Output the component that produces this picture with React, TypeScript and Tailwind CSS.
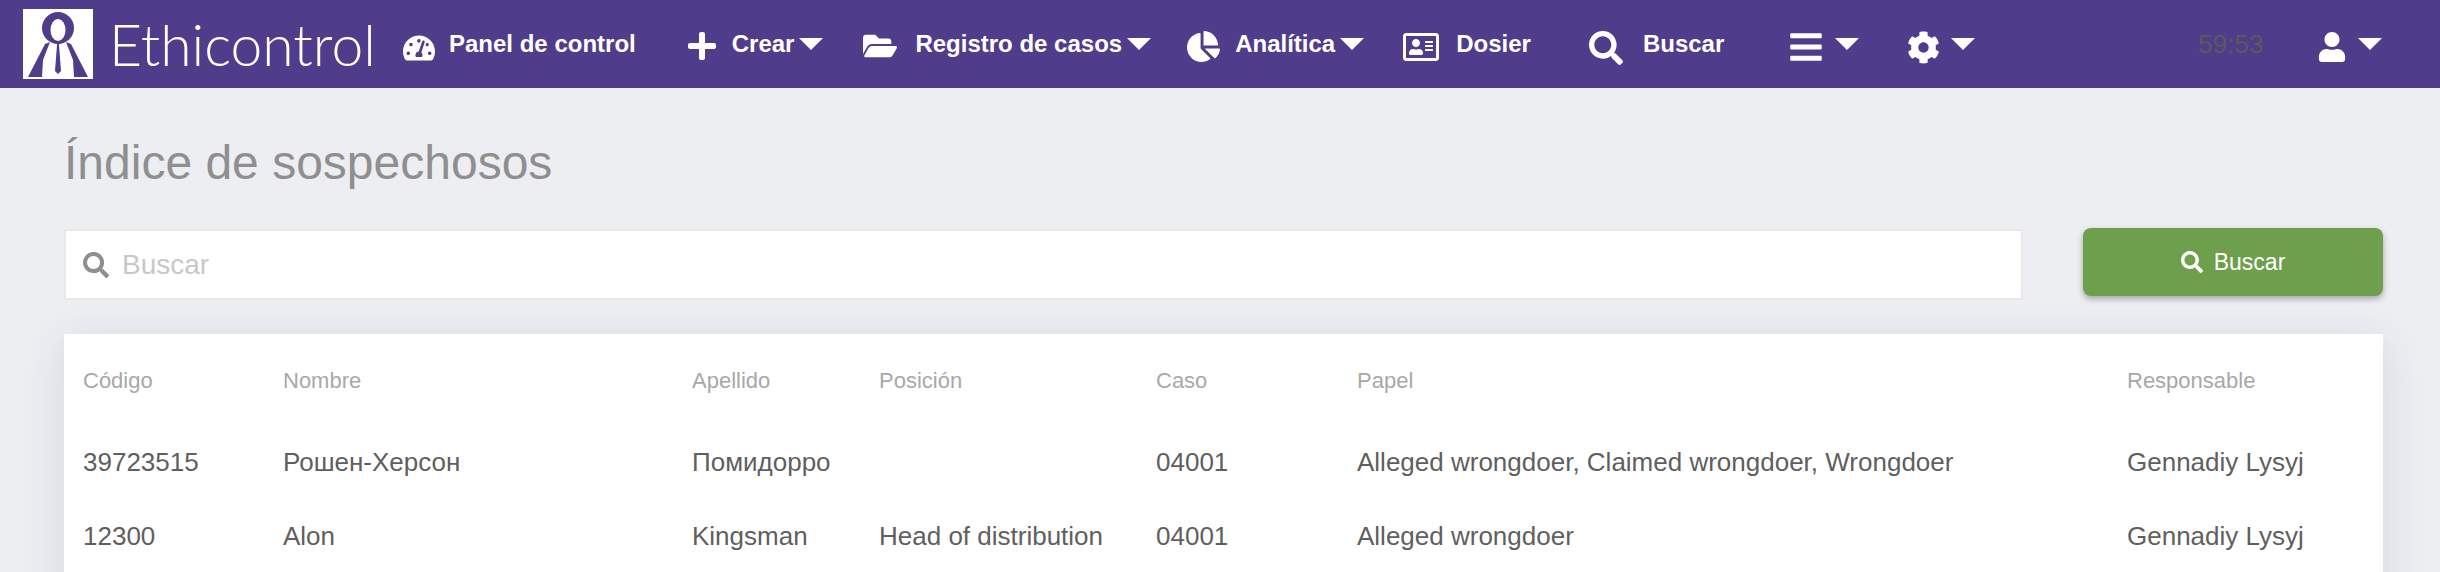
import type { ReactNode } from "react";
import {
  FaBars,
  FaChartPie,
  FaCog,
  FaFolderOpen,
  FaPlus,
  FaRegAddressCard,
  FaSearch,
  FaTachometerAlt,
  FaUser,
} from "react-icons/fa";

const sans = "font-['Liberation_Sans',Arial,sans-serif]";

interface NavItemProps {
  icon: ReactNode;
  label?: string;
  caret?: boolean;
  className?: string;
}

function Caret() {
  return (
    <span className="ml-[5px] h-0 w-0 border-x-[12px] border-t-[12px] border-x-transparent border-t-white" />
  );
}

function NavItem({ icon, label, caret, className }: NavItemProps) {
  return (
    <div className={`flex items-center ${className ?? ""}`}>
      {icon}
      {label && <span className="text-[24px] font-bold text-white">{label}</span>}
      {caret && <Caret />}
    </div>
  );
}

function Logo() {
  return (
    <svg viewBox="0 0 70 70" className="h-[70px] w-[70px] shrink-0">
      <rect width="70" height="70" fill="#fff" />
      <ellipse cx="35" cy="19" rx="16" ry="16" fill="#4f3d8b" />
      <ellipse cx="35" cy="21" rx="7.5" ry="11" fill="#fff" />
      <path d="M5 68 22 35 27 33 20 51 19 68Z" fill="#4f3d8b" />
      <path d="M65 68 48 35 43 33 50 51 51 68Z" fill="#4f3d8b" />
      <path d="M33.5 33h3l-.5 3 2 26-3 3-3-3 2-26Z" fill="#4f3d8b" />
    </svg>
  );
}

const rows = [
  {
    code: "39723515",
    name: "Рошен-Херсон",
    surname: "Помидорро",
    position: "",
    caseId: "04001",
    role: "Alleged wrongdoer, Claimed wrongdoer, Wrongdoer",
    owner: "Gennadiy Lysyj",
  },
  {
    code: "12300",
    name: "Alon",
    surname: "Kingsman",
    position: "Head of distribution",
    caseId: "04001",
    role: "Alleged wrongdoer",
    owner: "Gennadiy Lysyj",
  },
];

export default function App() {
  return (
    <div className={`h-[572px] overflow-hidden bg-[#edeef2] ${sans}`}>
      <nav className="flex h-[88px] items-center bg-[#4f3d8b] pl-[23px]">
        <Logo />
        <span className="ml-[16px] w-[265px] font-['Lato',sans-serif] text-[57px] font-light leading-none text-white">
          Ethicontrol
        </span>
        <NavItem
          className="ml-[29px]"
          icon={<FaTachometerAlt className="mr-[14px] translate-y-[4px] text-[32px] text-white" />}
          label="Panel de control"
        />
        <NavItem
          className="ml-[50px]"
          icon={<FaPlus className="mr-[14px] translate-y-[2px] text-[32px] text-white" />}
          label="Crear"
          caret
        />
        <NavItem
          className="ml-[40px]"
          icon={<FaFolderOpen className="mr-[18px] translate-y-[2px] text-[34px] text-white" />}
          label="Registro de casos"
          caret
        />
        <NavItem
          className="ml-[36px]"
          icon={<FaChartPie className="mr-[15px] translate-y-[2px] text-[33px] text-white" />}
          label="Analítica"
          caret
        />
        <NavItem
          className="ml-[39px]"
          icon={<FaRegAddressCard className="mr-[17px] translate-y-[3px] text-[36px] text-white" />}
          label="Dosier"
        />
        <NavItem
          className="ml-[58px]"
          icon={<FaSearch className="mr-[20px] translate-y-[4px] text-[34px] text-white" />}
          label="Buscar"
        />
        <NavItem
          className="ml-[64px]"
          icon={<FaBars className="mr-[6px] translate-y-[3px] text-[36px] text-white" />}
          caret
        />
        <NavItem
          className="ml-[48px]"
          icon={<FaCog className="mr-[6px] translate-y-[3px] text-[33px] text-white" />}
          caret
        />
        <span className="ml-[223px] text-[26px] text-[#5a5a5a]">59:53</span>
        <NavItem
          className="ml-[54px]"
          icon={<FaUser className="mr-[6px] translate-y-[3px] text-[30px] text-white" />}
          caret
        />
      </nav>

      <main className="pl-[64px] pr-[57px] pt-[50px]">
        <h1 className="text-[48px] font-light leading-[50px] text-[#8f8f8f]">Índice de sospechosos</h1>

        <div className="mt-[41px] flex items-start justify-between">
          <div className="flex h-[71px] w-[1959px] items-center border-2 border-[#e8e8e8] bg-white pl-[17px]">
            <FaSearch className="text-[26px] text-[#8f8f8f]" />
            <span className="ml-[13px] text-[28px] text-[#c8c8c8]">Buscar</span>
          </div>
          <button className="-mt-[1px] flex h-[68px] w-[300px] items-center justify-center rounded-[8px] bg-[#6e9f4c] text-[23px] text-white shadow-[0_3px_6px_rgba(0,0,0,0.3)]">
            <FaSearch className="mr-[11px] text-[22px]" />
            Buscar
          </button>
        </div>

        <div className="mt-[34px] bg-white pb-[40px] pt-[1px] shadow-[0_8px_40px_rgba(60,60,90,0.12)]">
          <table className="w-full table-fixed border-collapse text-left">
            <thead>
              <tr className="h-[90px] text-[22px] text-[#a8a8a8]">
                <th className="w-[219px] pl-[19px] font-normal">Código</th>
                <th className="w-[409px] font-normal">Nombre</th>
                <th className="w-[187px] font-normal">Apellido</th>
                <th className="w-[277px] font-normal">Posición</th>
                <th className="w-[201px] font-normal">Caso</th>
                <th className="w-[770px] font-normal">Papel</th>
                <th className="font-normal">Responsable</th>
              </tr>
            </thead>
            <tbody>
              {rows.map(row => (
                <tr key={row.code} className="h-[74px] text-[26px] text-[#5f5f5f]">
                  <td className="pl-[19px]">{row.code}</td>
                  <td>{row.name}</td>
                  <td>{row.surname}</td>
                  <td>{row.position}</td>
                  <td>{row.caseId}</td>
                  <td>{row.role}</td>
                  <td>{row.owner}</td>
                </tr>
              ))}
            </tbody>
          </table>
        </div>
      </main>
    </div>
  );
}
